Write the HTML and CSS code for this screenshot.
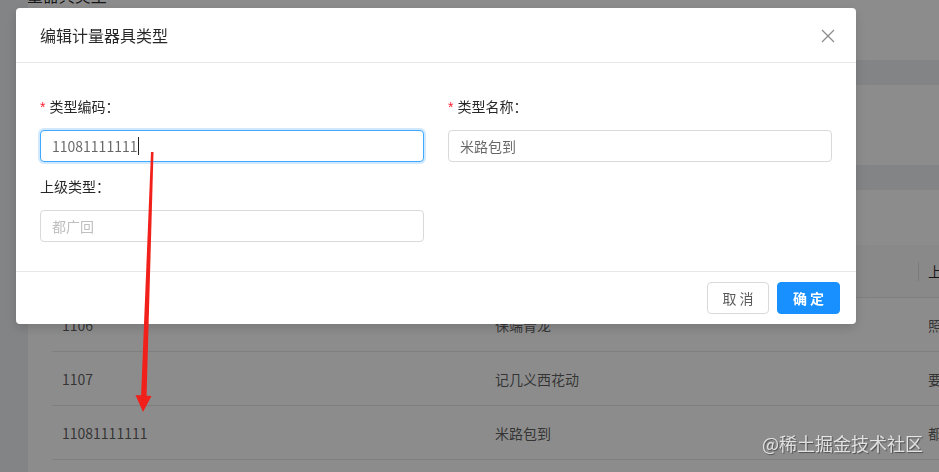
FILE: index.html
```html
<!DOCTYPE html>
<html lang="zh">
<head>
<meta charset="utf-8">
<title>编辑计量器具类型</title>
<link rel="stylesheet" href="styles.css">
</head>
<body>
<div class="page">
  <div class="card head-card"><div class="crumb">/ 计量器具类型</div></div>
  <div class="card search-card"></div>
  <div class="card table-card">
    <div class="toolbar"></div>
    <div class="table">
      <div class="tr th">
        <div class="td">类型编码</div>
        <div class="td">类型名称</div>
        <div class="td sep">上级类型</div>
      </div>
      <div class="tr">
        <div class="td">1106</div>
        <div class="td">保端青龙</div>
        <div class="td">照片</div>
      </div>
      <div class="tr">
        <div class="td">1107</div>
        <div class="td">记几义西花动</div>
        <div class="td">要求</div>
      </div>
      <div class="tr">
        <div class="td">11081111111</div>
        <div class="td">米路包到</div>
        <div class="td">都广回</div>
      </div>
    </div>
  </div>
</div>

<div class="mask"></div>

<div class="modal-wrap">
  <div class="modal">
    <div class="modal-header">
      <div class="modal-title">编辑计量器具类型</div>
      <button class="modal-close" aria-label="Close">
        <svg width="14" height="14" viewBox="0 0 14 14"><path d="M1 1 L13 13 M13 1 L1 13" stroke="#8c8c8c" stroke-width="1.3" fill="none"/></svg>
      </button>
    </div>
    <div class="modal-body">
      <div class="form">
        <div class="item">
          <label class="label"><span class="req">*</span>类型编码：</label>
          <div class="input focused"><span class="val">11081111111</span><span class="caret"></span></div>
        </div>
        <div class="item">
          <label class="label"><span class="req">*</span>类型名称：</label>
          <div class="input"><span class="val">米路包到</span></div>
        </div>
        <div class="item">
          <label class="label">上级类型：</label>
          <div class="input"><span class="ph">都广回</span></div>
        </div>
      </div>
    </div>
    <div class="modal-footer">
      <button class="btn">取 消</button>
      <button class="btn primary">确 定</button>
    </div>
  </div>
</div>

<svg class="arrow" width="939" height="472" viewBox="0 0 939 472">
  <polygon points="151,152 153.5,152 146.5,398 141,398" fill="#f2201b"/>
  <polygon points="135.5,395 151.5,396 143,412" fill="#f2201b"/>
</svg>

<div class="watermark">@稀土掘金技术社区</div>
</body>
</html>
```

FILE: styles.css
```css
* { box-sizing: border-box; }
html, body {
  margin: 0;
  padding: 0;
  width: 939px;
  height: 472px;
  overflow: hidden;
  font-family: "Noto Sans CJK SC", "Liberation Sans", sans-serif;
  font-size: 14px;
  color: rgba(0,0,0,0.65);
}
.page {
  height: 472px;
  background: #eef0f3;
  padding-left: 28px;
  display: flex;
  flex-direction: column;
  overflow: hidden;
}
.card { background: #ffffff; flex-shrink: 0; }
.head-card { height: 60px; overflow: hidden; }
.crumb {
  margin-top: -14px;
  margin-left: -27px;
  line-height: 18px;
  color: rgba(0,0,0,0.85);
  font-size: 16px;
  white-space: nowrap;
}
.search-card { height: 80px; margin-top: 25px; }
.table-card { margin-top: 25px; flex: 1; padding-left: 24px; }
.toolbar { height: 55px; }
.tr {
  display: grid;
  grid-template-columns: 433px 433px 1fr;
  height: 54px;
  border-bottom: 1px solid #e8e8e8;
  align-items: center;
}
.tr.th { height: 53px; background: #fafafa; color: rgba(0,0,0,0.85); }
.td { padding-left: 10px; white-space: nowrap; overflow: hidden; position: relative; }
.td.sep::before {
  content: "";
  position: absolute;
  left: 0;
  top: 1px;
  height: 21px;
  width: 1px;
  background: #e0e0e0;
}

.mask {
  position: fixed;
  inset: 0;
  background: rgba(0,0,0,0.45);
}

.modal-wrap {
  position: fixed;
  inset: 0;
  padding: 8px 0 0 16px;
}
.modal {
  width: 840px;
  background: #fff;
  border-radius: 4px;
  box-shadow: 0 4px 12px rgba(0,0,0,0.15);
  position: relative;
}
.modal-header {
  padding: 16px 24px;
  border-bottom: 1px solid #e8e8e8;
  height: 55px;
}
.modal-title {
  font-size: 16px;
  line-height: 22px;
  color: rgba(0,0,0,0.85);
}
.modal-close {
  position: absolute;
  top: 0;
  right: 0;
  width: 56px;
  height: 56px;
  border: 0;
  background: transparent;
  padding: 0;
  display: flex;
  align-items: center;
  justify-content: center;
}
.modal-body {
  padding: 32px 24px 29px;
}
.form {
  display: grid;
  grid-template-columns: 384px 384px;
  column-gap: 24px;
  row-gap: 13px;
}
.item { display: flex; flex-direction: column; gap: 13px; }
.label {
  line-height: 22px;
  height: 22px;
  color: rgba(0,0,0,0.85);
}
.req {
  color: #f5222d;
  margin-right: 4px;
  font-family: "Liberation Sans", sans-serif;
}
.input {
  height: 32px;
  border: 1px solid #d9d9d9;
  border-radius: 4px;
  padding: 0 11px;
  display: flex;
  align-items: center;
  color: rgba(0,0,0,0.6);
  background: #fff;
}
.input.focused {
  border-color: #40a9ff;
  box-shadow: 0 0 0 2px rgba(24,144,255,0.2);
}
.caret {
  display: inline-block;
  width: 1px;
  height: 18px;
  background: #222;
  margin-left: 1px;
}
.ph { color: #bfbfbf; }

.modal-footer {
  border-top: 1px solid #e8e8e8;
  padding: 10px 16px;
  display: flex;
  justify-content: flex-end;
  gap: 8px;
}
.btn {
  height: 32px;
  padding: 0;
  border: 1px solid #d9d9d9;
  border-radius: 4px;
  background: #fff;
  color: rgba(0,0,0,0.65);
  font-family: "Noto Sans CJK SC", "Liberation Sans", sans-serif;
  font-size: 14px;
  line-height: 30px;
  width: 62px;
  white-space: nowrap;
  text-align: center;
}
.btn.primary {
  background: #1890ff;
  border-color: #1890ff;
  color: #fff;
  font-weight: 700;
  width: 63px;
}

.arrow {
  position: fixed;
  left: 0;
  top: 0;
  pointer-events: none;
}
.watermark {
  position: fixed;
  left: 762px;
  top: 431px;
  font-size: 18px;
  line-height: 24px;
  color: rgba(255,255,255,0.78);
  text-shadow: 1px 1px 1px rgba(0,0,0,0.45);
  white-space: nowrap;
}
```
